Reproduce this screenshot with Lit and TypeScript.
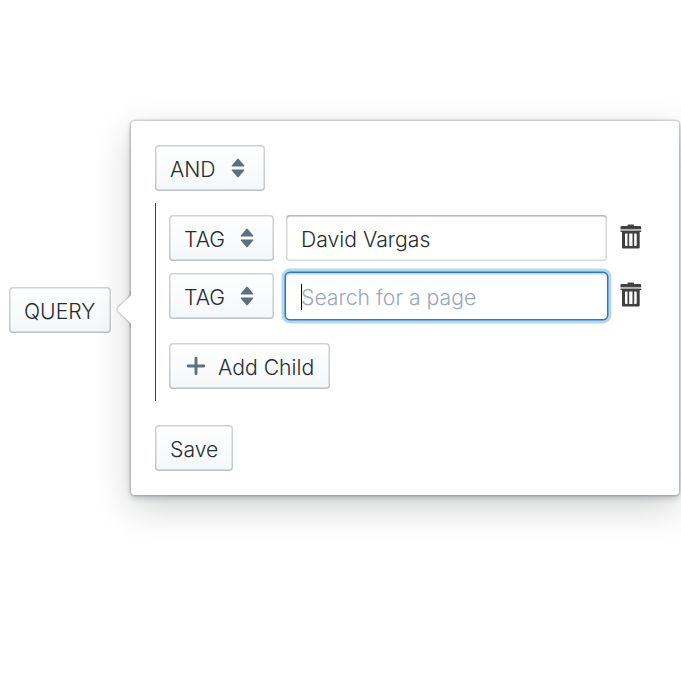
import { LitElement, html, css } from "lit";
import { customElement } from "lit/decorators.js";

const sortIcon = html`<svg class="sort" width="14" height="20" viewBox="0 0 14 20">
  <path d="M1.500 8.500h11c.8 0 1-.7.5-1.300L7.700 1Q7 .2 6.300 1L1 7.200c-.5.600-.3 1.300.5 1.300zM1.500 11.500h11c.8 0 1 .7.5 1.300L7.700 19Q7 19.800 6.300 19L1 12.800c-.5-.6-.3-1.300.5-1.300z" />
</svg>`;

const plusIcon = html`<svg class="plus" width="20" height="20" viewBox="0 0 20 20">
  <path d="M10 2.200v15.600M2.200 10h15.600" />
</svg>`;

const trashIcon = html`<svg class="trash" width="22" height="25" viewBox="0 0 22 25">
  <path fill-rule="evenodd" d="M7.500 2V1.500Q7.500.5 8.500.5h4.500q1 0 1 1V2H20q1.200 0 1.200 1.200V5H.5V3.200Q.5 2 1.700 2zM.5 6.500H21.200V8H19.700v15.500q0 1-1 1H3q-1 0-1-1V8H.5zM5 10.500v10.500q0 1 1 1h1.500V9.500H6q-1 0-1 1zM9.200 9.500V22h3.300V9.500zM14.200 9.500V22h1.500q1 0 1-1V10.500q0-1-1-1z" />
  <path class="lid" d="M.5 5.700h20.700" />
</svg>`;

@customElement("app-root")
export class AppRoot extends LitElement {
  static styles = css`
    :host {
      display: flex;
      align-items: flex-start;
      box-sizing: border-box;
      width: 681px;
      height: 680px;
      padding: 121px 0 0 9px;
      overflow: hidden;
      background: #fff;
      color: #252d33;
      font: 300 21.200px/1 Inter, "Liberation Sans", sans-serif;
    }
    * { box-sizing: border-box; }
    button {
      display: inline-flex;
      align-items: center;
      height: 46px;
      padding: 3px 15px 0;
      border: 0;
      border-radius: 4px;
      background: linear-gradient(#fff, #f4f7f9);
      box-shadow: inset 0 0 0 1.500px rgba(16, 22, 26, 0.2), inset 0 -1.500px 0 rgba(16, 22, 26, 0.04);
      color: inherit;
      font: inherit;
      white-space: nowrap;
    }
    .query { width: 102px; margin-top: 166px; }
    .popover {
      position: relative;
      width: 548px;
      height: 374px;
      margin-left: 20px;
      padding: 24px;
      border-radius: 4px;
      background: #fff;
      box-shadow: 0 0 0 1.500px rgba(16, 22, 26, 0.14), 0 3px 6px rgba(16, 22, 26, 0.2), 0 12px 36px rgba(16, 22, 26, 0.2);
    }
    .arrow {
      position: absolute;
      left: -16px;
      top: 165px;
      fill: #fff;
    }
    .arrow .edge { fill: none; stroke: rgba(16, 22, 26, 0.16); stroke-width: 1.500; }
    .and { width: 110px; }
    .children {
      display: flex;
      flex-direction: column;
      align-items: flex-start;
      height: 198px;
      margin-top: 12px;
      padding: 12px 0 0 13px;
      border-left: 1px solid #e00000;
    }
    .row { display: flex; height: 46px; margin-bottom: 12px; }
    .tag { width: 105px; margin-right: 12px; }
    .field {
      display: flex;
      align-items: center;
      width: 321px;
      height: 46px;
      padding: 3px 15px 0;
      border-radius: 4px;
      background: #fff;
      box-shadow: inset 0 0 0 1.500px rgba(16, 22, 26, 0.15), inset 0 1.500px 1.500px rgba(16, 22, 26, 0.2);
      white-space: nowrap;
    }
    .focused {
      box-shadow: 0 0 0 1.500px #2480bd, 0 0 0 4.500px rgba(19, 124, 189, 0.3), inset 0 1.500px 1.500px rgba(16, 22, 26, 0.2);
      color: #9aa8b4;
    }
    .caret { width: 1px; height: 26px; margin: 0 -1px 2px 0; background: #000; }
    button svg { flex: none; margin-bottom: 3px; }
    .sort { margin-left: auto; margin-right: 5px; fill: #5c7080; }
    .plus { fill: none; stroke: #5c7080; stroke-width: 2.900; stroke-linecap: round; margin-left: 2px; margin-right: 12px; }
    .trash { margin: 9px 0 0 13px; fill: #404040; }
    .lid { stroke: #b5b5b5; stroke-width: 1.500; }
    .add { width: 161px; margin-top: 12px; }
    .save { display: flex; width: 78px; margin-top: 24px; }
  `;

  private row(text: string, focused = false) {
    return html`<div class="row">
      <button class="tag">TAG${sortIcon}</button>
      <div class="field ${focused ? "focused" : ""}">
        ${focused ? html`<span class="caret"></span>` : ""}<span>${text}</span>
      </div>
      ${trashIcon}
    </div>`;
  }

  render() {
    return html`
      <button class="query">QUERY</button>
      <section class="popover">
        <svg class="arrow" width="17" height="46" viewBox="0 0 17 46">
          <path d="M17 5C17 9 15 11 12 13L3 21Q1 23.500 3 26L12 34C15 36 17 38 17 42z" />
          <path class="edge" d="M15.500 5C15.500 9 14 11 11.500 13L3 21Q1 23.500 3 26L11.500 34C14 36 15.500 38 15.500 42" />
        </svg>
        <button class="and">AND${sortIcon}</button>
        <div class="children">
          ${this.row("David Vargas")}
          ${this.row("Search for a page", true)}
          <button class="add">${plusIcon}Add Child</button>
        </div>
        <button class="save">Save</button>
      </section>
    `;
  }
}
